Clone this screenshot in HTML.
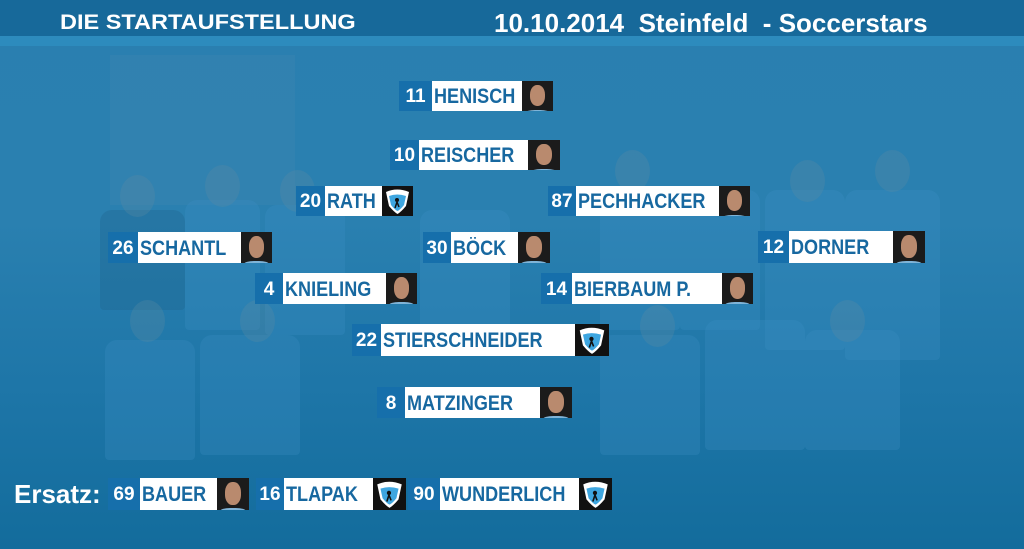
<!DOCTYPE html>
<html><head><meta charset="utf-8"><style>
body{margin:0;width:1024px;height:549px;overflow:hidden;background:#1f73a3;font-family:"Liberation Sans",Arial,sans-serif;position:relative}
.bg{position:absolute;inset:0;background:linear-gradient(#2a7fb0 0%,#2a80b0 40%,#1e76a8 70%,#136c9c 100%)}
.hdr{position:absolute;left:0;top:0;width:1024px;height:36px;background:#17699a}
.band{position:absolute;left:0;top:36px;width:1024px;height:10px;background:#2d8bbd}
.t{position:absolute;color:#fff;font-weight:bold;white-space:nowrap;transform-origin:0 0}
.e{position:absolute;display:flex;height:30px}
.n{background:#166fab;color:#fff;font-weight:bold;font-size:19px;display:flex;align-items:center;justify-content:center;padding-top:2px;box-sizing:border-box}
.m{background:#fff;color:#1768a0;font-weight:bold;font-size:21px;display:flex;align-items:center;padding-left:2px;padding-top:2px;box-sizing:border-box;white-space:nowrap;overflow:hidden}
.m span{display:inline-block;transform:scaleX(.86);transform-origin:0 50%}
.p{background:#1b1b1b;position:relative;overflow:hidden}
.p::before{content:"";position:absolute;left:25%;top:14%;width:50%;height:70%;border-radius:45%;background:#b98a6e}
.p::after{content:"";position:absolute;left:10%;bottom:-20%;width:80%;height:25%;border-radius:40%;background:#7fb4d8}
.l{background:#111;position:relative}
.l svg{position:absolute;left:0;top:0}
.sh{position:absolute;background:#3b8fc4;opacity:.3;border-radius:12px 12px 4px 4px}
.hd{position:absolute;background:#5d8aa3;opacity:.3;border-radius:50%}
</style></head><body>
<div class="bg"></div>
<div style="position:absolute;left:110px;top:55px;width:185px;height:150px;background:#3f87b2;opacity:.35"></div>
<div class="sh" style="left:100px;top:210px;width:85px;height:100px;background:#1e5f88"></div>
<div class="sh" style="left:185px;top:200px;width:75px;height:130px"></div>
<div class="sh" style="left:265px;top:205px;width:80px;height:130px"></div>
<div class="sh" style="left:420px;top:210px;width:90px;height:120px"></div>
<div class="sh" style="left:600px;top:190px;width:80px;height:140px"></div>
<div class="sh" style="left:680px;top:190px;width:80px;height:140px"></div>
<div class="sh" style="left:765px;top:190px;width:80px;height:160px"></div>
<div class="sh" style="left:845px;top:190px;width:95px;height:170px"></div>
<div class="sh" style="left:105px;top:340px;width:90px;height:120px"></div>
<div class="sh" style="left:200px;top:335px;width:100px;height:120px"></div>
<div class="sh" style="left:600px;top:335px;width:100px;height:120px"></div>
<div class="sh" style="left:705px;top:320px;width:100px;height:130px"></div>
<div class="sh" style="left:805px;top:330px;width:95px;height:120px"></div>
<div class="hd" style="left:120px;top:175px;width:35px;height:42px"></div>
<div class="hd" style="left:205px;top:165px;width:35px;height:42px"></div>
<div class="hd" style="left:280px;top:170px;width:35px;height:42px"></div>
<div class="hd" style="left:615px;top:150px;width:35px;height:42px"></div>
<div class="hd" style="left:790px;top:160px;width:35px;height:42px"></div>
<div class="hd" style="left:875px;top:150px;width:35px;height:42px"></div>
<div class="hd" style="left:130px;top:300px;width:35px;height:42px"></div>
<div class="hd" style="left:240px;top:300px;width:35px;height:42px"></div>
<div class="hd" style="left:640px;top:305px;width:35px;height:42px"></div>
<div class="hd" style="left:830px;top:300px;width:35px;height:42px"></div>
<div class="hdr"></div><div class="band"></div>
<div class="t" style="left:60px;top:11px;font-size:21px;transform:scaleX(1.12)">DIE STARTAUFSTELLUNG</div>
<div class="t" style="left:494px;top:8px;font-size:26px">10.10.2014&nbsp; Steinfeld&nbsp; - Soccerstars</div>
<div class="t" style="left:14px;top:479px;font-size:26px">Ersatz:</div>

<div class="e" style="left:399px;top:81px"><div class="n" style="width:33px">11</div><div class="m" style="width:90px"><span>HENISCH</span></div><div class="p" style="width:31px"></div></div>
<div class="e" style="left:390px;top:140px"><div class="n" style="width:29px">10</div><div class="m" style="width:109px"><span>REISCHER</span></div><div class="p" style="width:32px"></div></div>
<div class="e" style="left:296px;top:186px"><div class="n" style="width:29px">20</div><div class="m" style="width:57px"><span>RATH</span></div><div class="l" style="width:31px"><svg width="31" height="30" viewBox="0 0 31 30"><path d="M4 6 Q15 1 27 6 L24 20 Q19 26 15.5 28 Q12 26 7 20 Z" fill="#fff"/><path d="M7 10 Q15 7 24 10 L22 19 Q18 24 15.5 25 Q13 24 9 19 Z" fill="#3ea6e0"/><circle cx="15" cy="14" r="2" fill="#111"/><path d="M15 16 L13 22 M15 16 L17 21" stroke="#111" stroke-width="1.5"/></svg></div></div>
<div class="e" style="left:548px;top:186px"><div class="n" style="width:28px">87</div><div class="m" style="width:143px"><span>PECHHACKER</span></div><div class="p" style="width:31px"></div></div>
<div class="e" style="left:108px;top:232px;height:31px"><div class="n" style="width:30px">26</div><div class="m" style="width:103px"><span>SCHANTL</span></div><div class="p" style="width:31px"></div></div>
<div class="e" style="left:423px;top:232px;height:31px"><div class="n" style="width:28px">30</div><div class="m" style="width:67px"><span>BÖCK</span></div><div class="p" style="width:32px"></div></div>
<div class="e" style="left:758px;top:231px;height:32px"><div class="n" style="width:31px">12</div><div class="m" style="width:104px"><span>DORNER</span></div><div class="p" style="width:32px"></div></div>
<div class="e" style="left:255px;top:273px;height:31px"><div class="n" style="width:28px">4</div><div class="m" style="width:103px"><span>KNIELING</span></div><div class="p" style="width:31px"></div></div>
<div class="e" style="left:541px;top:273px;height:31px"><div class="n" style="width:31px">14</div><div class="m" style="width:150px"><span>BIERBAUM P.</span></div><div class="p" style="width:31px"></div></div>
<div class="e" style="left:352px;top:324px;height:32px"><div class="n" style="width:29px">22</div><div class="m" style="width:194px"><span>STIERSCHNEIDER</span></div><div class="l" style="width:34px"><svg width="34" height="32" viewBox="0 0 31 30"><path d="M4 6 Q15 1 27 6 L24 20 Q19 26 15.5 28 Q12 26 7 20 Z" fill="#fff"/><path d="M7 10 Q15 7 24 10 L22 19 Q18 24 15.5 25 Q13 24 9 19 Z" fill="#3ea6e0"/><circle cx="15" cy="14" r="2" fill="#111"/><path d="M15 16 L13 22 M15 16 L17 21" stroke="#111" stroke-width="1.5"/></svg></div></div>
<div class="e" style="left:377px;top:387px;height:31px"><div class="n" style="width:28px">8</div><div class="m" style="width:135px"><span>MATZINGER</span></div><div class="p" style="width:32px"></div></div>

<div class="e" style="left:108px;top:478px;height:32px"><div class="n" style="width:32px">69</div><div class="m" style="width:77px"><span>BAUER</span></div><div class="p" style="width:32px"></div></div>
<div class="e" style="left:256px;top:478px;height:32px"><div class="n" style="width:28px">16</div><div class="m" style="width:89px"><span>TLAPAK</span></div><div class="l" style="width:33px"><svg width="33" height="32" viewBox="0 0 31 30"><path d="M4 6 Q15 1 27 6 L24 20 Q19 26 15.5 28 Q12 26 7 20 Z" fill="#fff"/><path d="M7 10 Q15 7 24 10 L22 19 Q18 24 15.5 25 Q13 24 9 19 Z" fill="#3ea6e0"/><circle cx="15" cy="14" r="2" fill="#111"/><path d="M15 16 L13 22 M15 16 L17 21" stroke="#111" stroke-width="1.5"/></svg></div></div>
<div class="e" style="left:408px;top:478px;height:32px"><div class="n" style="width:32px">90</div><div class="m" style="width:139px"><span>WUNDERLICH</span></div><div class="l" style="width:33px"><svg width="33" height="32" viewBox="0 0 31 30"><path d="M4 6 Q15 1 27 6 L24 20 Q19 26 15.5 28 Q12 26 7 20 Z" fill="#fff"/><path d="M7 10 Q15 7 24 10 L22 19 Q18 24 15.5 25 Q13 24 9 19 Z" fill="#3ea6e0"/><circle cx="15" cy="14" r="2" fill="#111"/><path d="M15 16 L13 22 M15 16 L17 21" stroke="#111" stroke-width="1.5"/></svg></div></div>
</body></html>
